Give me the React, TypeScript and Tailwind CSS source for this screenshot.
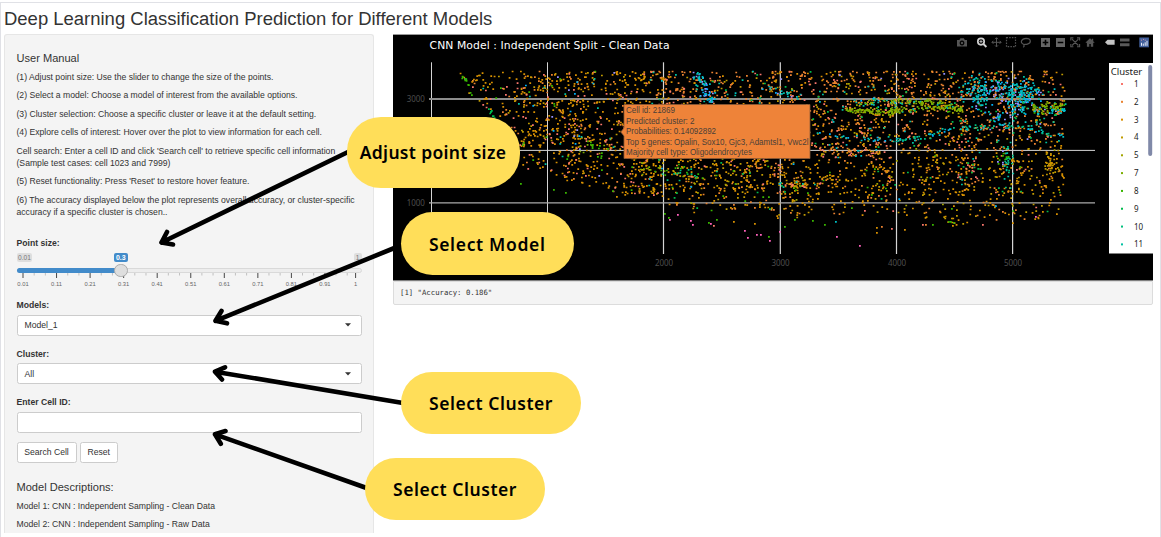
import React from "react";

const PALETTE = {
  salmon: "#F8766D",
  orange: "#EA8331",
  amber: "#D89000",
  gold: "#C09B00",
  olive: "#A3A500",
  lime: "#7CAE00",
  green: "#39B600",
  emerald: "#00BB4E",
  jade: "#00BF7D",
  teal: "#00C1A3",
  cyan: "#00BFC4",
  sky: "#00B0F6",
  violet: "#9590FF",
  pink: "#FF62BC",
};
type Hue = keyof typeof PALETTE;

let seed = 20231;
const rnd = () => {
  seed = (seed + 0x6d2b79f5) | 0;
  let t = Math.imul(seed ^ (seed >>> 15), 1 | seed);
  t = (t + Math.imul(t ^ (t >>> 7), 61 | t)) ^ t;
  return ((t ^ (t >>> 14)) >>> 0) / 4294967296;
};
const gauss = () => rnd() + rnd() + rnd() - 1.5;
const pick = (mix: [Hue, number][]): Hue => {
  let t = rnd() * mix.reduce((a, m) => a + m[1], 0);
  for (const [h, w] of mix) {
    t -= w;
    if (t <= 0) return h;
  }
  return mix[0][0];
};
const curve = (pts: number[][], x: number) => {
  for (let i = 1; i < pts.length; i++) {
    if (x <= pts[i][0]) {
      const [x0, y0] = pts[i - 1];
      const [x1, y1] = pts[i];
      return y0 + ((y1 - y0) * (x - x0)) / (x1 - x0);
    }
  }
  return pts[pts.length - 1][1];
};

const FLOOR = [
  [458, 70], [464, 80], [471, 97], [480, 106], [490, 116], [505, 140], [520, 166], [548, 174], [575, 184],
  [598, 184], [612, 194], [640, 198], [663, 202], [680, 209], [720, 211], [750, 205], [772, 216], [800, 220],
  [815, 205], [840, 215], [870, 214], [900, 216], [930, 221], [960, 226], [985, 216], [1000, 223], [1030, 220], [1066, 219],
];

function buildPoints() {
  const marks: [number, number, Hue][] = [];
  const put = (x: number, y: number, h: Hue) => {
    marks.push([Math.round(x * 3) / 3, Math.round(y * 3) / 3, h]);
  };
  const upper: [Hue, number][] = [["orange", 46], ["salmon", 13], ["amber", 20], ["gold", 10], ["teal", 4], ["emerald", 3], ["cyan", 2], ["violet", 1], ["olive", 2]];
  const left: [Hue, number][] = [["amber", 66], ["orange", 10], ["salmon", 12], ["gold", 8], ["teal", 3], ["green", 3], ["violet", 1], ["sky", 1]];
  const lower: [Hue, number][] = [["amber", 52], ["gold", 20], ["orange", 17], ["salmon", 4], ["green", 3], ["emerald", 2], ["olive", 3], ["sky", 1]];
  for (let i = 0; i < 4700; i++) {
    let x = 458 + rnd() * 606;
    let y = 70.5 + rnd() * 156;
    if (marks.length && rnd() < 0.22) {
      const near = marks[Math.floor(rnd() * marks.length)];
      x = Math.min(1064, near[0] + gauss() * 7);
      y = Math.max(70.5, near[1] + gauss() * 7);
    }
    const floor = curve(FLOOR, x) + gauss() * 3;
    if (y > floor) continue;
    if (y > 195 && rnd() < 0.35) continue;
    if (x < 520 && rnd() < 0.35) continue;
    if (x > 800 && y > 145 && rnd() < 0.22) continue;
    put(x, y, pick(x < 650 ? left : y < 148 ? upper : lower));
  }
  const blob = (n: number, cx: number, cy: number, sx: number, sy: number, mix: [Hue, number][]) => {
    for (let i = 0; i < n; i++) put(cx + gauss() * sx, cy + gauss() * sy, pick(mix));
  };
  const band = (n: number, pts: number[][], spread: number, mix: [Hue, number][]) => {
    const a = pts[0][0];
    const b = pts[pts.length - 1][0];
    for (let i = 0; i < n; i++) {
      const x = a + rnd() * (b - a);
      put(x, curve(pts, x) + gauss() * spread, pick(mix));
    }
  };
  const aqua: [Hue, number][] = [["cyan", 60], ["teal", 12], ["sky", 16], ["violet", 10], ["orange", 8]];
  const leaf: [Hue, number][] = [["lime", 45], ["olive", 45], ["green", 10], ["teal", 6]];
  for (let i = 0; i < 70; i++) {
    const t = rnd();
    put(698 + t * 13 + gauss() * 7, 71 + t * 31, pick([["cyan", 40], ["violet", 35], ["sky", 20], ["teal", 12]]));
  }
  band(80, [[846, 110], [896, 111]], 3, leaf);
  band(55, [[855, 103], [880, 99], [896, 102]], 3, [["teal", 30], ["lime", 20], ["orange", 30], ["sky", 10]]);
  band(85, [[890, 101], [930, 101], [962, 108]], 3, [["lime", 50], ["olive", 30], ["teal", 30]]);
  band(95, [[890, 110], [920, 106], [962, 109]], 3.5, leaf);
  band(60, [[1032, 109], [1065, 103]], 6, leaf);
  band(32, [[1032, 111], [1065, 109]], 4, aqua);
  blob(85, 978, 91, 14, 14, aqua);
  blob(55, 995, 88, 14, 10, [["violet", 35], ["cyan", 40], ["orange", 20], ["sky", 10]]);
  blob(110, 1022, 91, 24, 11, aqua);
  blob(32, 1015, 98, 10, 12, aqua);
  band(75, [[975, 104], [992, 112], [1004, 116], [1020, 106], [1032, 98]], 8, [["violet", 35], ["sky", 20], ["cyan", 20], ["emerald", 25]]);
  band(35, [[782, 126], [815, 131], [850, 138], [896, 139]], 3, [["cyan", 50], ["sky", 40], ["teal", 20]]);
  band(90, [[896, 139], [925, 136], [950, 128], [985, 126], [1025, 125], [1045, 132], [1065, 137]], 3, [["cyan", 50], ["teal", 25], ["jade", 25], ["sky", 12]]);
  band(18, [[760, 85], [780, 93], [800, 96]], 4, aqua);
  blob(30, 1007, 163, 5, 22, [["jade", 40], ["teal", 30], ["emerald", 30]]);
  blob(45, 1050, 164, 9, 13, [["gold", 70], ["amber", 30]]);
  blob(32, 968, 170, 13, 14, [["salmon", 30], ["orange", 30], ["teal", 20], ["emerald", 20]]);
  blob(18, 592, 150, 14, 9, [["green", 60], ["lime", 40]]);
  blob(28, 685, 172, 28, 9, [["green", 50], ["lime", 20], ["jade", 30]]);
  blob(40, 645, 166, 17, 9, [["amber", 70], ["lime", 30]]);
  band(40, [[780, 184], [820, 184]], 3, [["amber", 70], ["teal", 12], ["salmon", 12]]);
  band(60, [[810, 148], [850, 152], [896, 150]], 8, [["orange", 60], ["salmon", 30], ["cyan", 12]]);
  band(12, [[461, 74], [468, 84], [472, 96]], 3, [["green", 60], ["emerald", 40]]);
  band(9, [[488, 108], [494, 118]], 3, [["emerald", 100]]);
  blob(10, 1001, 157, 6, 9, [["green", 80], ["violet", 20]]);
  const strays: [number, number, Hue][] = [
    [520, 183, "green"], [553, 189, "green"], [565, 192, "green"], [664, 213, "green"], [668, 217, "green"],
    [669, 219, "pink"], [677, 214, "pink"], [690, 220, "pink"], [692, 224, "pink"], [708, 222, "green"],
    [710, 223, "pink"], [713, 225, "salmon"], [716, 219, "green"], [733, 221, "amber"], [744, 230, "pink"],
    [747, 237, "pink"], [754, 223, "amber"], [756, 234, "pink"], [760, 234, "pink"], [768, 236, "green"],
    [769, 240, "pink"], [779, 231, "pink"], [784, 226, "green"], [794, 219, "green"], [812, 220, "green"],
    [824, 224, "green"], [835, 221, "cyan"], [836, 236, "pink"], [859, 245, "pink"], [876, 227, "amber"],
    [876, 232, "amber"], [881, 226, "orange"], [891, 228, "salmon"], [904, 229, "amber"], [922, 224, "salmon"],
    [925, 224, "orange"], [932, 224, "green"], [948, 221, "green"], [950, 221, "green"], [953, 222, "green"],
    [982, 224, "salmon"], [1035, 216, "pink"], [951, 208, "green"],
  ];
  strays.forEach(([x, y, h]) => put(x, y, h));
  const paths: Record<string, string> = {};
  for (const [x, y, h] of marks) {
    paths[h] = (paths[h] || "") + `M${x.toFixed(2)} ${y.toFixed(2)}h1.8v1.7h-1.8z`;
  }
  return paths;
}
const POINTS = buildPoints();

const LEGEND: [string, Hue][] = [
  ["1", "salmon"], ["2", "orange"], ["3", "amber"], ["4", "gold"], ["5", "olive"],
  ["7", "lime"], ["8", "green"], ["9", "emerald"], ["10", "jade"], ["11", "teal"],
];

function ModeBar() {
  return (
    <g fill="none" stroke="#555" strokeWidth="1.2">
      <path fill="#555" stroke="none" fillRule="evenodd" d="M957 40h2.4l1-1.8h3.4l1 1.8h2.2v6.4h-10zM962 40.6a2.4 2.4 0 1 0 .01 0zm0 1.2a1.2 1.2 0 1 1-.01 0z" />
      <circle cx="981" cy="41.6" r="3.2" stroke="#d0d0d0" strokeWidth="1.7" />
      <path d="M983.4 44l3 3" stroke="#d0d0d0" strokeWidth="1.9" />
      <path d="M979.4 41.6h3.2M981 40v3.2" stroke="#d0d0d0" strokeWidth=".8" />
      <path d="M992 42.3h9M996.500 37.800v9M995 39.200l1.500-1.500 1.500 1.500M995 45.400l1.500 1.500 1.500-1.500M993.400 40.800l-1.500 1.500 1.500 1.500M999.600 40.800l1.500 1.500-1.500 1.500" strokeWidth="1" />
      <rect x="1006.500" y="37.700" width="9" height="9" strokeDasharray="1.500 1.200" />
      <path d="M1023.600 44.200c-4-1.400-2.400-5.500 2.600-5.800 5 0 5.500 4.700 1.200 5.700-2 .6-4.200-.4-3.400 1.200.3.800.2 1.500-.9 2" />
      <path fill="#666" stroke="none" fillRule="evenodd" d="M1041 38h9v9h-9zm3.700 1.700v2h-2v1.600h2v2h1.600v-2h2v-1.600h-2v-2z" />
      <path fill="#666" stroke="none" fillRule="evenodd" d="M1056 38h9v9h-9zm1.700 3.700v1.600h5.600v-1.600z" />
      <path d="M1070.800 40.500v-2.600h2.600M1077 37.900h2.600v2.600M1079.600 44v2.700h-2.600M1073.400 46.700h-2.600V44M1072 39.200l6.400 6.300M1078.400 39.200l-6.400 6.300" strokeWidth="1.100" />
      <path fill="#555" stroke="none" d="M1085.500 42.500l4.500-4.300 1.800 1.700v-1.200h1.400v2.500l1.400 1.300-.7.600-.7-.6v4.200h-2.400v-2.600h-1.500v2.600h-2.400v-4.200l-.7.600z" />
      <path fill="#c4c4c4" stroke="none" d="M1105 42.200l2.600-2.500h7v5h-7z" />
      <path fill="#5a5a5a" stroke="none" d="M1120 38.500h9.500v3h-9.500zM1120 43.300h9.500v3h-9.500z" />
      <rect x="1139.300" y="37.500" width="9.600" height="9.800" fill="#42609c" stroke="none" />
      <path d="M1141.500 45.800v-3M1143.300 45.800v-2.200M1145.200 45.800v-3.500M1147 45.800v-5" stroke="#e8edf7" strokeWidth="1" />
      <path d="M1141 40.200h1M1143 39.400h1M1144.800 40.200h1" stroke="#c98fa8" strokeWidth="1" />
    </g>
  );
}

function ScatterPlot() {
  const vertical = [431.5, 547.5, 663.5, 780.3, 896.5, 1012.6];
  return (
    <svg className="block h-[247px] w-[760px]" viewBox="393 34 760 247">
      <rect x="393" y="34.500" width="760" height="246" fill="#000" />
      <path d="M393 34.500h760" stroke="#999" strokeWidth="1" />
      <g stroke="#d4d4d4">
        {vertical.map((x, i) => (
          <path key={x} d={`M${x} 62.300V254`} strokeWidth={i < 2 ? 1 : 1.2} />
        ))}
        <path d="M429 99H1095" stroke="#8c8c8c" strokeWidth="1.800" />
        <path d="M431 150.400H1095" strokeWidth="1" />
        <path d="M429 202.800H1095" stroke="#aaa" strokeWidth="1.200" />
      </g>
      {Object.entries(POINTS).map(([h, d]) => (
        <path key={h} d={d} fill={PALETTE[h as Hue]} />
      ))}
      <text x="429.500" y="49" fill="#fff" textLength="240" className="font-['DejaVu_Sans',sans-serif] text-[10.8px]">
        CNN Model : Independent Split - Clean Data
      </text>
      <g fill="#4d4d4d" textAnchor="middle" className="font-['Noto_Sans',sans-serif] text-[8px]">
        <text x="415.800" y="101.500" textLength="18">3000</text>
        <text x="415.800" y="205.700" textLength="18">1000</text>
        <text x="664" y="266" textLength="18">2000</text>
        <text x="780.500" y="266" textLength="18">3000</text>
        <text x="897" y="266" textLength="18">4000</text>
        <text x="1013" y="266" textLength="18">5000</text>
      </g>
      <path d="M624 104.500H810V158.500H624V136L620.800 132L624 128Z" fill="#ee8339" stroke="#8a5a38" strokeWidth=".8" />
      <g fill="#4a4038" className="font-['Liberation_Sans',Arial,sans-serif] text-[8.300px]">
        <text x="626" y="113.300" textLength="49" lengthAdjust="spacingAndGlyphs">Cell id: 21869</text>
        <text x="626" y="123.900" textLength="68.500" lengthAdjust="spacingAndGlyphs">Predicted cluster: 2</text>
        <text x="626" y="134.300" textLength="90" lengthAdjust="spacingAndGlyphs">Probabilities: 0.14092892</text>
        <text x="626" y="144.900" textLength="182.500" lengthAdjust="spacingAndGlyphs">Top 5 genes: Opalin, Sox10, Gjc3, Adamtsl1, Vwc2l</text>
        <text x="626" y="155.400" textLength="126" lengthAdjust="spacingAndGlyphs">Majority cell type: Oligodendrocytes</text>
      </g>
      <rect x="1109" y="63" width="44" height="190.500" fill="#fff" />
      <g fill="#222" className="font-['Noto_Sans',sans-serif]">
        <text x="1110.800" y="75.200" textLength="31.500" className="text-[9.600px]">Cluster</text>
        {LEGEND.map(([label, h], i) => (
          <g key={label}>
            <rect x="1121" y={83 + i * 17.82} width="2" height="2" fill={PALETTE[h]} />
            <text x="1134" y={87 + i * 17.82} className="text-[8px]">{label}</text>
          </g>
        ))}
      </g>
      <rect x="1148.200" y="65" width="4" height="91" rx="2" fill="#8089a8" />
      <ModeBar />
    </svg>
  );
}

function Slider() {
  const labels = ["0.01", "0.11", "0.21", "0.31", "0.41", "0.51", "0.61", "0.71", "0.81", "0.91", "1"];
  const at = (i: number) => (i === 10 ? 355.3 : 22.7 + i * 33.55) - 16.7;
  return (
    <div className="flex h-[42px] flex-col">
      <div className="relative flex h-[15px] items-start justify-between pt-[3px] text-[6.6px] leading-[9px] text-[#777]">
        <span className="rounded-[2px] bg-[#dedede] px-[1.500px]">0.01</span>
        <span className="absolute left-[97.400px] top-[3px] rounded-[2px] bg-[#428bca] px-[2px] text-[7px] font-bold text-white">0.3</span>
        <span className="rounded-[2px] bg-[#dedede] px-[2px]">1</span>
      </div>
      <div className="relative mt-[2.500px] h-[5px] rounded-full border border-[#d9d9d9] bg-[#ededed]">
        <div className="-ml-px -mt-px h-[5px] w-[104px] rounded-l-full bg-[#428bca]" />
        <div className="absolute -top-[5px] left-[96.500px] size-[13.500px] rounded-full border border-[#ababab] bg-[#dedede]" />
      </div>
      <svg className="block h-[19px] w-[346px] overflow-visible" viewBox="0 0 346 19">
        {Array.from({ length: 31 }, (_, i) => (
          <path key={i} d={`M${6 + i * 11.18} 0V2.500`} stroke="#aaa" strokeWidth=".7" className={i % 3 === 0 || i > 29 ? "hidden" : ""} />
        ))}
        {labels.map((l, i) => (
          <g key={l}>
            <path d={`M${at(i)} 0V5`} stroke="#333" strokeWidth=".9" />
            <text x={at(i)} y="12.500" textAnchor="middle" fill="#666" className="text-[5.800px]">{l}</text>
          </g>
        ))}
      </svg>
    </div>
  );
}

function SelectBox({ value }: { value: string }) {
  return (
    <div className="flex h-[21px] items-center justify-between rounded-[2.500px] border border-[#ccc] bg-white pl-[7px] pr-[10px] leading-[12px]">
      <span>{value}</span>
      <svg className="h-[4px] w-[6px]" viewBox="0 0 6 4"><path d="M0 .3h6L3 3.500z" fill="#333" /></svg>
    </div>
  );
}

function Sidebar() {
  return (
    <aside className="flex h-[499px] w-[370px] shrink-0 flex-col overflow-hidden rounded-t-[3px] border border-b-0 border-[#e6e6e6] bg-[#f4f4f4] px-[11.500px] pt-[17px] text-[8.630px] leading-[12.300px]">
      <h4 className="h-[19px] text-[11.070px] leading-[12.300px]">User Manual</h4>
      <div className="flex h-[166px] flex-col gap-[6.150px] whitespace-nowrap">
        <p>(1) Adjust point size: Use the slider to change the size of the points.</p>
        <p>(2) Select a model: Choose a model of interest from the available options.</p>
        <p>(3) Cluster selection: Choose a specific cluster or leave it at the default setting.</p>
        <p>(4) Explore cells of interest: Hover over the plot to view information for each cell.</p>
        <p>Cell search: Enter a cell ID and click 'Search cell' to retrieve specific cell information<br />(Sample test cases: cell 1023 and 7999)</p>
        <p>(5) Reset functionality: Press 'Reset' to restore hover feature.</p>
        <p>(6) The accuracy displayed below the plot represents overall accuracy, or cluster-specific<br />accuracy if a specific cluster is chosen..</p>
      </div>
      <label className="h-[13px] font-bold">Point size:</label>
      <Slider />
      <label className="mt-[7px] h-[15.500px] font-bold">Models:</label>
      <SelectBox value="Model_1" />
      <label className="mt-[12px] h-[15.500px] font-bold">Cluster:</label>
      <SelectBox value="All" />
      <label className="mt-[12px] h-[15.500px] font-bold">Enter Cell ID:</label>
      <div className="h-[21px] rounded-[2.500px] border border-[#ccc] bg-white" />
      <div className="mt-[9px] flex gap-[3px]">
        <button className="h-[21px] w-[60px] rounded-[2.500px] border border-[#ccc] bg-white">Search Cell</button>
        <button className="h-[21px] w-[38.500px] rounded-[2.500px] border border-[#ccc] bg-white">Reset</button>
      </div>
      <h4 className="mt-[18px] h-[19.500px] text-[11.070px] leading-[12.300px]">Model Descriptions:</h4>
      <div className="flex flex-col gap-[6.150px]">
        <p>Model 1: CNN : Independent Sampling - Clean Data</p>
        <p>Model 2: CNN : Independent Sampling - Raw Data</p>
      </div>
    </aside>
  );
}

const PILL = "absolute flex items-center justify-center rounded-[34px] bg-[#ffde59] font-['Noto_Sans',sans-serif] text-[17.500px] font-semibold text-black whitespace-nowrap";

function Annotations() {
  return (
    <>
      <svg className="absolute left-0 top-0 h-[537px] w-[1161px]" viewBox="0 0 1161 537" fill="none" stroke="#000" strokeWidth="4.600" strokeLinecap="round" strokeLinejoin="round">
        <path d="M348 152L161.500 242.500M167 232L161.500 242.500L173 244.500" />
        <path d="M403 244.500L215.500 320.800M221.500 311L215.500 320.800L227 323.300" />
        <path d="M403 403L215 371.700M225 367.300L215 371.700L222 379.500" />
        <path d="M368 488.500L215 434.300M225.500 431L215 434.300L220.800 443.800" />
      </svg>
      <div className={`${PILL} left-[346.500px] top-[117px] h-[71px] w-[173px] tracking-[0.330px]`}>Adjust point size</div>
      <div className={`${PILL} left-[401px] top-[212px] h-[63.300px] w-[172.500px] tracking-[0.660px]`}>Select Model</div>
      <div className={`${PILL} left-[401px] top-[372px] h-[62px] w-[180px] tracking-[0.550px]`}>Select Cluster</div>
      <div className={`${PILL} left-[365px] top-[458px] h-[62px] w-[180px] tracking-[0.550px]`}>Select Cluster</div>
    </>
  );
}

export default function App() {
  return (
    <div className="relative h-[537px] w-[1161px] overflow-hidden bg-white pt-[2px] font-['Liberation_Sans',Arial,sans-serif] text-[#333]">
      <div className="h-[535px] border-x border-t border-[#e0e1e6] pl-[3px]">
        <h2 className="h-[31px] pt-[5px] text-[18.480px] leading-[22px] whitespace-nowrap">Deep Learning Classification Prediction for Different Models</h2>
        <div className="flex gap-[19px]">
          <Sidebar />
          <main className="w-[760px]">
            <ScatterPlot />
            <pre className="h-[24px] rounded-b-[2px] border border-[#dcdcdc] bg-[#f4f4f4] pl-[6px] pt-[5px] font-['DejaVu_Sans_Mono',monospace] text-[7.300px] leading-[12px]">[1] "Accuracy: 0.186"</pre>
          </main>
        </div>
      </div>
      <Annotations />
    </div>
  );
}
